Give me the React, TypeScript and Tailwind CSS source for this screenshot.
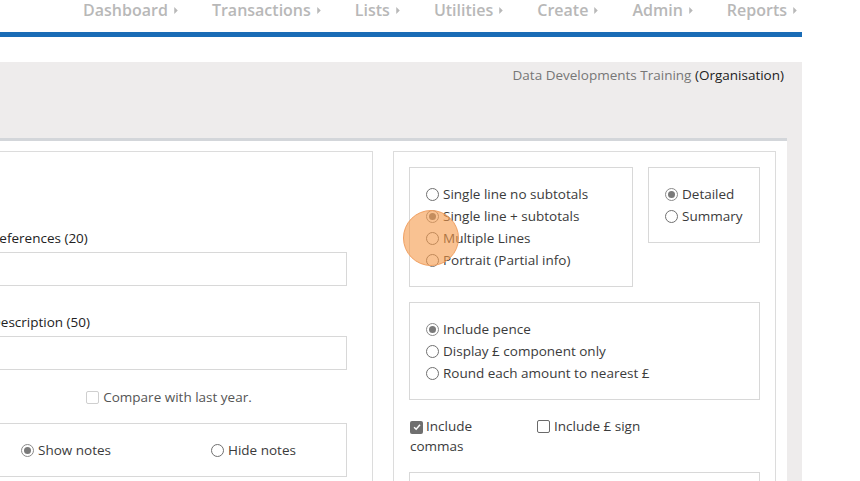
import type { ReactNode } from 'react'

const navItems = ['Dashboard', 'Transactions', 'Lists', 'Utilities', 'Create', 'Admin', 'Reports']

function Radio({ checked = false }: { checked?: boolean }) {
  return (
    <span
      className={`inline-flex h-[13px] w-[13px] shrink-0 items-center justify-center rounded-full border bg-white ${
        checked ? 'border-[#8a8a8a]' : 'border-[#707070]'
      }`}
    >
      {checked && <span className="h-[7px] w-[7px] rounded-full bg-[#7a7a7a]" />}
    </span>
  )
}

function Checkbox({ checked = false, disabled = false }: { checked?: boolean; disabled?: boolean }) {
  if (checked) {
    return (
      <span className="inline-flex h-[13px] w-[13px] shrink-0 items-center justify-center rounded-[2px] bg-[#6f6f6f] align-[-1px]">
        <svg viewBox="0 0 12 12" className="h-[10px] w-[10px]">
          <path d="M2.5 6.2 L5 8.6 L9.6 3.4" fill="none" stroke="#fff" strokeWidth="1.8" />
        </svg>
      </span>
    )
  }
  return (
    <span
      className={`inline-block h-[13px] w-[13px] shrink-0 rounded-[2px] border bg-white ${
        disabled ? 'border-[#cfcfcf] bg-[#f4f4f4]' : 'border-[#6a6a6a]'
      }`}
    />
  )
}

function Option({ checked, children }: { checked?: boolean; children: ReactNode }) {
  return (
    <div className="flex h-[22px] items-center gap-[4px]">
      <Radio checked={checked} />
      <span>{children}</span>
    </div>
  )
}

export default function App() {
  return (
    <div
      className="w-[860px] h-[481px] overflow-hidden bg-white text-[#3b3b3b]"
      style={{ fontFamily: '"Open Sans", "Noto Sans", sans-serif' }}
    >
      <div className="w-[802px]">
        {/* top nav */}
        <div className="flex h-[32px] items-start justify-end gap-[34px] pr-[5px] text-[16px] font-semibold leading-[20px] text-[#b8b8b8]">
          {navItems.map((n) => (
            <div key={n} className="flex items-center gap-[6px]">
              <span>{n}</span>
              <svg viewBox="0 0 4 8" className="h-[7px] w-[4px]">
                <path d="M0 0 L4 4 L0 8 Z" fill="#b8b8b8" />
              </svg>
            </div>
          ))}
        </div>
        <div className="h-[5px] bg-[#1a6cb6]" />
        <div className="h-[25px]" />

        <div className="bg-[#eeecec]">
          <div className="h-[76px] pt-[3px] pr-[18px] text-right text-[13.5px] leading-[20px] text-[#777]">
            Data Developments Training <span className="text-[#222]">(Organisation)</span>
          </div>

          <div className="mr-[15px] border-t-[3px] border-[#d3d6da] bg-white pt-[10px] pb-[40px]">
            <div className="flex gap-[20px] text-[13.5px]">
              {/* left card */}
              <div className="ml-[-35px] w-[408px] shrink-0 border border-[#dcdcdc] pl-[25px] pr-[25px] pt-[76px] pb-[30px]">
                <div className="font-medium leading-[20px] text-[#222]">References (20)</div>
                <div className="mt-[4px] h-[34px] border border-[#d8d8d8]" />
                <div className="mt-[26px] font-medium leading-[20px] text-[#222]">Description (50)</div>
                <div className="mt-[4px] h-[34px] border border-[#d8d8d8]" />
                <div className="mt-[17px] flex items-center justify-center gap-[4px] leading-[20px] text-[#555]">
                  <Checkbox disabled />
                  <span>Compare with last year.</span>
                </div>
                <div className="mt-[16px] flex h-[54px] items-center border border-[#d8d8d8]">
                  <div className="flex w-[219px] items-center gap-[4px] pl-[29px]">
                    <Radio checked />
                    <span>Show notes</span>
                  </div>
                  <div className="flex items-center gap-[4px]">
                    <Radio />
                    <span>Hide notes</span>
                  </div>
                </div>
              </div>

              {/* right card */}
              <div className="relative w-[383px] shrink-0 border border-[#dcdcdc] pl-[15px] pr-[15px] pt-[15px]">
                <div className="flex gap-[15px]">
                  <div className="h-[120px] w-[224px] border border-[#d8d8d8] pl-[16px] pt-[15px]">
                    <Option>Single line no subtotals</Option>
                    <Option checked>Single line + subtotals</Option>
                    <Option>Multiple Lines</Option>
                    <Option>Portrait (Partial info)</Option>
                  </div>
                  <div className="h-[76px] w-[112px] border border-[#d8d8d8] pl-[16px] pt-[15px]">
                    <Option checked>Detailed</Option>
                    <Option>Summary</Option>
                  </div>
                </div>

                <div className="mt-[15px] h-[98px] w-[351px] border border-[#d8d8d8] pl-[16px] pt-[15px]">
                  <Option checked>Include pence</Option>
                  <Option>Display £ component only</Option>
                  <Option>Round each amount to nearest £</Option>
                </div>

                <div className="mt-[16px] flex leading-[20px]">
                  <div className="w-[128px] pl-[1px] pr-[30px]">
                    <Checkbox checked />
                    <span className="ml-[3px]">Include commas</span>
                  </div>
                  <div className="flex h-[20px] items-center gap-[4px]">
                    <Checkbox />
                    <span>Include £ sign</span>
                  </div>
                </div>

                <div className="mt-[16px] h-[60px] w-[351px] border border-[#d8d8d8]" />

                {/* click highlight */}
                <div className="absolute left-[9px] top-[58px] h-[56px] w-[56px] rounded-full border border-[#f0a062] bg-[#f59a4a]/60" />
              </div>
            </div>
          </div>
        </div>
      </div>
    </div>
  )
}
